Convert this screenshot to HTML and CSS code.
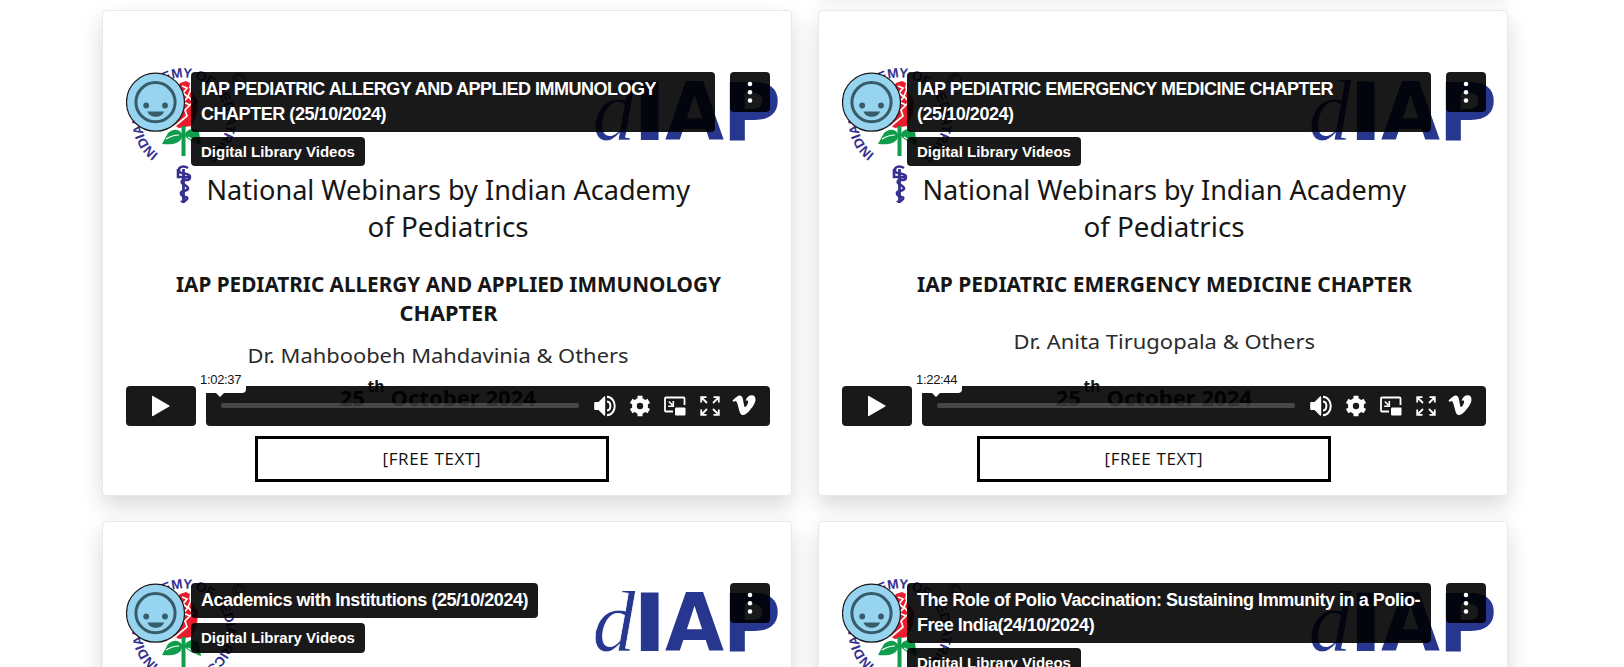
FILE: index.html
```html
<!DOCTYPE html>
<html lang="en">
<head>
<meta charset="utf-8">
<title>Digital Library Videos</title>
<link rel="stylesheet" href="styles.css">
</head>
<body>
<svg class="defs" width="0" height="0">
  <symbol id="emblem" viewBox="0 0 150 150" overflow="visible">
    <path id="ring" d="M42.500 92A42.500 42.500 0 1 1 93.500 92" fill="none"/>
    <text class="ring-text" textLength="216"><textPath href="#ring" textLength="216">INDIAN ACADEMY OF PEDIATRICS</textPath></text>
    <text class="copy" x="116" y="24">©</text>
    <path d="M64 21l6-2 4 2-1 5 4 5 5 8-1 13-6 12-12 2-9-5-3-12 3-14z" fill="#ea1c2d"/>
    <path d="M66 24l5 2-4 5 5 4-5 5 7 3M75 27l-3 7 5 6-8 8 2 6-12 10M62 30l3 9-6 6" fill="none" stroke="#fff" stroke-width="1.700"/>
    <path d="M67.500 64v30" stroke="#0f9d4c" stroke-width="4"/>
    <path d="M66 72c-3-6-10-5-14-1l-6 11c9 1 18 0 20-7zM69 72c2-6 10-6 14-2l2 13c-6-2-13-5-16-9z" fill="#0f9d4c"/>
    <path d="M50 77c5-3 9-4 13-4M72 75l9 5" stroke="#fff" stroke-width="1.2" fill="none"/>
    <path d="M67.500 107v34" stroke="#36308f" stroke-width="2.8"/>
    <path d="M72 106c-5-3-10-1-9 3s11 1 11 6-6 2-7 3c-5 4 6 5 5 9-2 3-8 1-7 5s8 2 6 5-5 2-6 3M62 107v8h12" stroke="#36308f" stroke-width="2.6" fill="none"/>
  </symbol>
  <symbol id="diap" viewBox="0 0 190 80" overflow="visible">
    <g fill="#27368e">
      <text class="logo-d" x="2.500" y="67" textLength="43" lengthAdjust="spacingAndGlyphs">d</text>
      <text class="logo-b" x="42.300" y="67" textLength="35" lengthAdjust="spacingAndGlyphs">I</text>
      <text class="logo-b" x="75" y="67" textLength="59" lengthAdjust="spacingAndGlyphs">A</text>
      <text class="logo-b" x="132.500" y="67" textLength="58.500" lengthAdjust="spacingAndGlyphs">P</text>
    </g>
  </symbol>
  <symbol id="face" viewBox="0 0 60 60">
    <circle cx="29.500" cy="30.200" r="29" fill="#96d4f0" stroke="#1a1a1a" stroke-width="1.2"/>
    <circle cx="29.500" cy="30.200" r="19.600" fill="none" stroke="#375b69" stroke-width="3"/>
    <circle cx="20.200" cy="33.5" r="2.9" fill="#375b69"/><circle cx="39" cy="33.5" r="2.9" fill="#375b69"/>
    <path d="M21.500 39.500h16.500c-2 7-14.500 7-16.500 0z" fill="#375b69"/>
  </symbol>
  <symbol id="dots" viewBox="0 0 40 40"><g fill="#fff"><circle cx="20" cy="12" r="2.3"/><circle cx="20" cy="20.300" r="2.300"/><circle cx="20" cy="28.500" r="2.300"/></g></symbol>
  <symbol id="play" viewBox="0 0 20 22"><path d="M1 1.300v19.400c0 .600.500.700 1 .400L18.300 11.500c.500-.300.500-.700 0-1L2 .900c-.500-.300-1-.200-1 .400z" fill="#fff"/></symbol>
  <symbol id="volume" viewBox="0 0 24 22">
    <path d="M1.500 7h3L10 1.500c.500-.500 1.200-.300 1.200.500v18c0 .800-.700 1-1.200.500L4.500 15h-3c-.800 0-1.300-.400-1.300-1V8c0-.600.500-1 1.300-1z" fill="#fff"/>
    <path d="M13 6.500c4.500.500 4.500 8.500 0 9M13 1.800c10.300.700 10.300 17.700 0 18.400" fill="none" stroke="#fff" stroke-width="2"/>
  </symbol>
  <symbol id="gear" viewBox="0 0 22 22">
    <g fill="none" stroke="#fff"><circle cx="11" cy="11" r="5.600" stroke-width="4.800"/>
    <path d="M11 .8v4M11 17.200v4M2.170 5.900l3.400 2M16.400 14.100l3.400 2M2.170 16.100l3.400-2M16.400 7.900l3.400-2" stroke-width="5"/></g>
  </symbol>
  <symbol id="pip" viewBox="0 0 22 20">
    <path d="M9 15.500H2c-.6 0-1-.4-1-1V2.500c0-.6.400-1 1-1h17.500c.6 0 1 .4 1 1V9" fill="none" stroke="#fff" stroke-width="1.800"/>
    <rect x="11" y="11.500" width="10.500" height="8" rx="1" fill="#fff"/>
    <path d="M4.800 5.500l3.500 3.500M9.300 5v5.200H4.200" fill="none" stroke="#fff" stroke-width="1.600"/>
  </symbol>
  <symbol id="full" viewBox="0 0 20 20">
    <path d="M1.200 6.500V1.200h5.300M13.500 1.200h5.300v5.300M18.800 13.500v5.300h-5.300M6.500 18.800H1.200v-5.300M1.500 1.500l5.500 5.500M18.500 1.500l-5.500 5.500M18.500 18.500l-5.500-5.500M1.500 18.500l5.500-5.500" fill="none" stroke="#fff" stroke-width="1.800"/>
  </symbol>
  <symbol id="vimeo" viewBox="0 0 24 21">
    <path d="M23.500 5c-.1 2.200-1.700 5.300-4.700 9.100-3.100 4-5.700 6-7.900 6-1.300 0-2.500-1.200-3.400-3.700L5.700 9.800C5 7.300 4.300 6.100 3.500 6.100c-.2 0-.8.300-1.700 1L.5 5.500C3 3.400 5.500.7 7.300.5c2-.2 3.200 1.200 3.700 4.100.9 5.200 1.400 7.500 2 7.500.9 0 3-3.300 3.100-5.100.2-1.700-1.200-1.700-2.600-1.100C14.600 2 17 .2 20 .3c2.400.1 3.600 1.700 3.500 4.700z" fill="#fff"/>
  </symbol>
</svg>

<main class="grid">
  <article class="card"></article>

  <article class="card">
    <div class="player">
      <svg class="slide" viewBox="0 0 664 374">
        <use href="#emblem" width="150" height="150"/>
        <use href="#diap" x="474" y="11" width="190" height="80"/>
        <text class="h" x="90.500" y="138.300" textLength="483.500" lengthAdjust="spacingAndGlyphs">National Webinars by Indian Academy</text>
        <text class="h" x="251.500" y="175.300" textLength="161" lengthAdjust="spacingAndGlyphs">of Pediatrics</text>
        <text class="b" x="60" y="230" textLength="545" lengthAdjust="spacingAndGlyphs">IAP PEDIATRIC ALLERGY AND APPLIED IMMUNOLOGY</text>
        <text class="b" x="283.500" y="259" textLength="98" lengthAdjust="spacingAndGlyphs">CHAPTER</text>
        <text class="p" x="131.500" y="301.200" textLength="381" lengthAdjust="spacingAndGlyphs">Dr. Mahboobeh Mahdavinia &amp; Others</text>
        <text class="d" x="223.500" y="344.400" textLength="25.500" lengthAdjust="spacingAndGlyphs">25</text>
        <text class="t" x="251.500" y="329.500" textLength="17" lengthAdjust="spacingAndGlyphs">th</text>
        <text class="d" x="274.500" y="344.400" textLength="145.500" lengthAdjust="spacingAndGlyphs">October 2024</text>
      </svg>
      <div class="overlay">
        <header class="top">
          <svg class="avatar"><use href="#face"/></svg>
          <div class="titles">
            <h2 class="title upper">IAP PEDIATRIC ALLERGY AND APPLIED IMMUNOLOGY<br><span class="mid">CHAPTER (25/10/2024)</span></h2>
            <p class="owner">Digital Library Videos</p>
          </div>
          <svg class="menu"><use href="#dots"/></svg>
        </header>
        <footer class="controls">
          <div class="play"><svg width="20" height="22"><use href="#play"/></svg></div>
          <div class="bar">
            <div class="track"><span class="time">1:02:37</span></div>
            <svg class="i-volume"><use href="#volume"/></svg>
            <svg class="i-gear"><use href="#gear"/></svg>
            <svg class="i-pip"><use href="#pip"/></svg>
            <svg class="i-full"><use href="#full"/></svg>
            <svg class="i-vimeo"><use href="#vimeo"/></svg>
          </div>
        </footer>
      </div>
    </div>
    <div class="free">[FREE TEXT]</div>
  </article>

  <article class="card right">
    <div class="player">
      <svg class="slide" viewBox="0 0 664 374">
        <use href="#emblem" width="150" height="150"/>
        <use href="#diap" x="474" y="11" width="190" height="80"/>
        <text class="h" x="90.500" y="138.300" textLength="483.500" lengthAdjust="spacingAndGlyphs">National Webinars by Indian Academy</text>
        <text class="h" x="251.500" y="175.300" textLength="161" lengthAdjust="spacingAndGlyphs">of Pediatrics</text>
        <text class="b" x="85" y="230" textLength="495" lengthAdjust="spacingAndGlyphs">IAP PEDIATRIC EMERGENCY MEDICINE CHAPTER</text>
        <text class="p" x="181.500" y="287" textLength="301.500" lengthAdjust="spacingAndGlyphs">Dr. Anita Tirugopala &amp; Others</text>
        <text class="d" x="223.500" y="344.400" textLength="25.500" lengthAdjust="spacingAndGlyphs">25</text>
        <text class="t" x="251.500" y="329.500" textLength="17" lengthAdjust="spacingAndGlyphs">th</text>
        <text class="d" x="274.500" y="344.400" textLength="145.500" lengthAdjust="spacingAndGlyphs">October 2024</text>
      </svg>
      <div class="overlay">
        <header class="top">
          <svg class="avatar"><use href="#face"/></svg>
          <div class="titles">
            <h2 class="title upper">IAP PEDIATRIC EMERGENCY MEDICINE CHAPTER<br><span class="mid">(25/10/2024)</span></h2>
            <p class="owner">Digital Library Videos</p>
          </div>
          <svg class="menu"><use href="#dots"/></svg>
        </header>
        <footer class="controls">
          <div class="play"><svg width="20" height="22"><use href="#play"/></svg></div>
          <div class="bar">
            <div class="track"><span class="time">1:22:44</span></div>
            <svg class="i-volume"><use href="#volume"/></svg>
            <svg class="i-gear"><use href="#gear"/></svg>
            <svg class="i-pip"><use href="#pip"/></svg>
            <svg class="i-full"><use href="#full"/></svg>
            <svg class="i-vimeo"><use href="#vimeo"/></svg>
          </div>
        </footer>
      </div>
    </div>
    <div class="free">[FREE TEXT]</div>
  </article>

  <article class="card">
    <div class="player">
      <svg class="slide" viewBox="0 0 664 374">
        <use href="#emblem" width="150" height="150"/>
        <use href="#diap" x="474" y="11" width="190" height="80"/>
      </svg>
      <div class="overlay">
        <header class="top">
          <svg class="avatar"><use href="#face"/></svg>
          <div class="titles">
            <h2 class="title short">Academics with Institutions (25/10/2024)</h2>
            <p class="owner">Digital Library Videos</p>
          </div>
          <svg class="menu"><use href="#dots"/></svg>
        </header>
      </div>
    </div>
  </article>

  <article class="card right">
    <div class="player">
      <svg class="slide" viewBox="0 0 664 374">
        <use href="#emblem" width="150" height="150"/>
        <use href="#diap" x="474" y="11" width="190" height="80"/>
      </svg>
      <div class="overlay">
        <header class="top">
          <svg class="avatar"><use href="#face"/></svg>
          <div class="titles">
            <h2 class="title">The Role of Polio Vaccination: Sustaining Immunity in a Polio-<br>Free India(24/10/2024)</h2>
            <p class="owner">Digital Library Videos</p>
          </div>
          <svg class="menu"><use href="#dots"/></svg>
        </header>
      </div>
    </div>
  </article>
</main>
</body>
</html>
```
FILE: styles.css
```css
* { box-sizing: border-box; }
html, body { height: 667px; overflow: hidden; }
body { margin: 0; background: #fff; font-family: "Liberation Sans", Arial, sans-serif; }
.defs { position: absolute; }

.grid {
  display: grid;
  grid-template-columns: 690px 690px;
  grid-auto-rows: 485.600px;
  gap: 25.700px 26px;
  margin: -501.200px 0 0 102.400px;
}
.card {
  background: #fff;
  border: 1px solid #e9e9e9;
  border-radius: 4px;
  box-shadow: 0 10px 22px rgba(0, 0, 0, .15);
  padding: 50.900px 0 0 12.200px;
}
.card:first-child { grid-column: 2; }

.player { display: grid; width: 664px; height: 373.800px; }
.slide, .overlay { grid-area: 1 / 1; width: 664px; height: 374px; }
.slide { overflow: visible; fill: #161616; font-family: "Noto Sans", sans-serif; }
.h { font-size: 27.300px; }
.b { font-size: 21px; font-weight: 700; }
.p { font-size: 20.700px; fill: #2b2b2b; }
.d { font-size: 20.700px; font-weight: 700; }
.t { font-size: 15.500px; font-weight: 700; }
.ring-text { font: bold 13.500px "Liberation Sans", sans-serif; fill: #36308f; }
.copy { font: 18px "Liberation Sans", sans-serif; fill: #36308f; }
.logo-d { font: italic 87px "Liberation Serif", serif; stroke: #fff; stroke-width: .8px; }
.logo-b { font: bold 81px "DejaVu Sans", sans-serif; }

.overlay {
  position: relative;
  display: flex;
  flex-direction: column;
  justify-content: space-between;
  padding: 10px 9.300px 10px 10px;
}
.top { display: flex; align-items: flex-start; }
.avatar { width: 60px; height: 60px; flex: none; margin-right: 5.400px; }
.titles { flex: 1; min-width: 0; display: flex; flex-direction: column; align-items: flex-start; gap: 5px; margin-right: 15px; }
.title, .owner { margin: 0; background: rgba(0, 0, 0, .9); border-radius: 4px; color: #fff; font-weight: bold; white-space: nowrap; }
.title { width: 100%; padding: 5px 10px; font-size: 18px; line-height: 25px; letter-spacing: -.450px; }
.title.upper { letter-spacing: -.500px; }
.mid { letter-spacing: -.450px; }
.title.short { width: auto; }
.owner { padding: 0 10px; font-size: 15px; line-height: 29.300px; }
.menu { width: 40px; height: 40px; flex: none; border-radius: 4px; background: rgba(0, 0, 0, .9); }

.controls { display: flex; gap: 10px; }
.play, .bar { height: 40px; border-radius: 4px; background: rgba(0, 0, 0, .9); display: flex; align-items: center; }
.play { width: 70px; justify-content: center; }
.bar { flex: 1; padding-left: 15px; }
.bar svg { flex: none; }
.i-volume { width: 24px; height: 22px; margin-left: 15px; }
.i-gear { width: 22px; height: 22px; margin-left: 11px; }
.i-pip { width: 22px; height: 20px; margin-left: 13px; }
.i-full { width: 20px; height: 20px; margin-left: 14px; }
.i-vimeo { width: 24px; height: 21px; margin-left: 12px; }
.track { position: relative; flex: none; width: 358px; height: 5px; border-radius: 3px; background: rgba(255, 255, 255, .2); }
.time {
  position: absolute; left: -25px; bottom: 15px; width: 50px; height: 24px;
  background: #fff; border-radius: 4px; color: #111;
  font-size: 13px; line-height: 22px; letter-spacing: -.350px; text-align: center;
}
.time::after {
  content: ""; position: absolute; left: 20px; top: 24px;
  border: solid transparent; border-width: 4px 4px 0; border-top-color: #fff;
}
.free {
  width: 354px; height: 46px; margin-left: 139.300px;
  border: 3px solid #000; color: #111;
  font: 17px/39px "Open Sans", sans-serif; letter-spacing: .650px; text-align: center;
}
.right .free { margin-left: 145.300px; }
```
